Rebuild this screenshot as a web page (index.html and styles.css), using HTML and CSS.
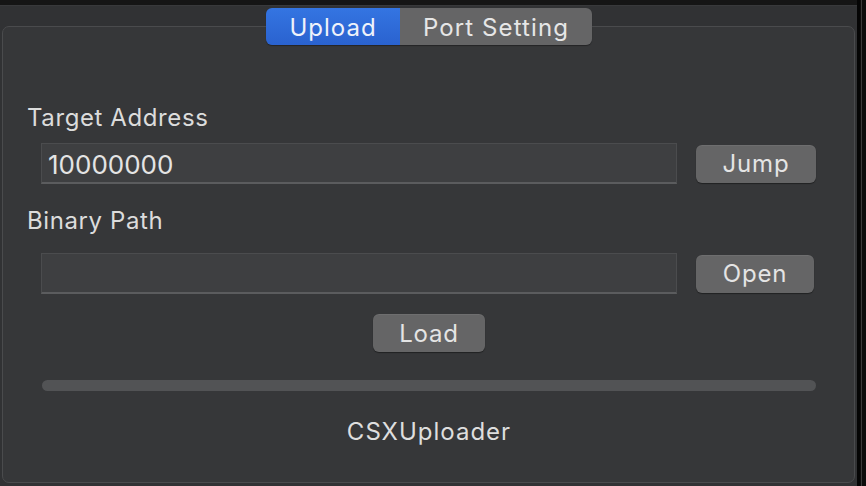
FILE: index.html
```html
<!DOCTYPE html>
<html>
<head>
<meta charset="utf-8">
<link rel="stylesheet" href="styles.css">
</head>
<body>
<div class="screen">
  <div class="window">
    <div class="tabs">
      <div class="seg">
        <div class="seg-item active">Upload</div>
        <div class="seg-item">Port Setting</div>
      </div>
    </div>
    <div class="box">
      <div class="label first">Target Address</div>
      <div class="row">
        <div class="field">10000000</div>
        <div class="btn jump">Jump</div>
      </div>
      <div class="label second">Binary Path</div>
      <div class="row row2">
        <div class="field"></div>
        <div class="btn open">Open</div>
      </div>
      <div class="center">
        <div class="btn load">Load</div>
      </div>
      <div class="progress"></div>
      <div class="status">CSXUploader</div>
    </div>
  </div>
  <div class="edge"></div>
</div>
</body>
</html>
```

FILE: styles.css
```css
* { box-sizing: border-box; }
html, body {
  margin: 0;
  padding: 0;
  width: 866px;
  height: 486px;
  overflow: hidden;
  background: #151515;
  font-family: Inter, "Liberation Sans", sans-serif;
  color: #dedede;
}
.screen {
  display: flex;
  height: 486px;
}
.window {
  margin-top: 5px;
  width: 857px;
  height: 481px;
  background: #313234;
  border-top: 1px solid #38393b;
  display: flex;
  flex-direction: column;
  align-items: flex-start;
}
.edge {
  width: 9px;
  height: 486px;
  background: #0c0c0c;
  border-left: 3px solid #050505;
}
.edge::after {
  content: "";
  display: block;
  margin-left: 1px;
  width: 1px;
  height: 486px;
  background: #3a3a3a;
}
.tabs {
  width: 857px;
  display: flex;
  justify-content: center;
  padding-top: 2px;
  padding-left: 1px;
  position: relative;
  z-index: 2;
  margin-bottom: -19px;
}
.seg {
  display: flex;
  width: 326px;
  height: 37px;
  border-radius: 6px;
  overflow: hidden;
  box-shadow: 0 1px 1px rgba(0,0,0,0.35);
}
.seg-item {
  display: flex;
  align-items: center;
  justify-content: center;
  font-size: 24px;
  letter-spacing: 1.1px;
  color: #e6e6e6;
  background: #656566;
  padding-top: 1px;
}
.seg-item.active {
  width: 134px;
  background: linear-gradient(#3475e2, #2a62cf);
  color: #eef2fa;
  letter-spacing: 1px;
}
.seg-item:last-child {
  flex: 1;
}
.box {
  margin-left: 2px;
  width: 853px;
  height: 457px;
  background: #363739;
  border: 1px solid #4a4b4d;
  border-radius: 7px;
  padding: 0 0 0 24px;
}
.label {
  font-size: 24px;
  letter-spacing: 0.6px;
  line-height: 28px;
  color: #dcdcdc;
}
.label.first { margin-top: 77px; }
.label.second { margin-top: 23px; }
.row {
  display: flex;
  align-items: center;
  margin-top: 11px;
  padding-left: 14px;
}
.row2 { margin-top: 18px; }
.field {
  width: 636px;
  height: 41px;
  background: #3e3f41;
  border: 1px solid #4b4c4e;
  border-bottom: 2px solid #5b5c5e;
  font-size: 26px;
  line-height: 36px;
  padding-top: 3px;
  padding-left: 6px;
  color: #e4e4e4;
}
.btn {
  height: 38px;
  background: #656566;
  border-radius: 6px;
  box-shadow: 0 1px 1px rgba(0,0,0,0.4), inset 0 1px 0 rgba(255,255,255,0.06);
  display: flex;
  align-items: center;
  justify-content: center;
  font-size: 24px;
  letter-spacing: 0.8px;
  color: #e4e4e4;
}
.jump { width: 120px; margin-left: 19px; }
.open { width: 118px; margin-left: 19px; }
.center {
  width: 804px;
  display: flex;
  justify-content: center;
  margin-top: 20px;
}
.load { width: 112px; }
.progress {
  margin-top: 28px;
  margin-left: 15px;
  width: 774px;
  height: 11px;
  border-radius: 6px;
  background: #525355;
}
.status {
  width: 804px;
  text-align: center;
  font-size: 24px;
  letter-spacing: 1px;
  margin-top: 26px;
  color: #dedede;
}
```
